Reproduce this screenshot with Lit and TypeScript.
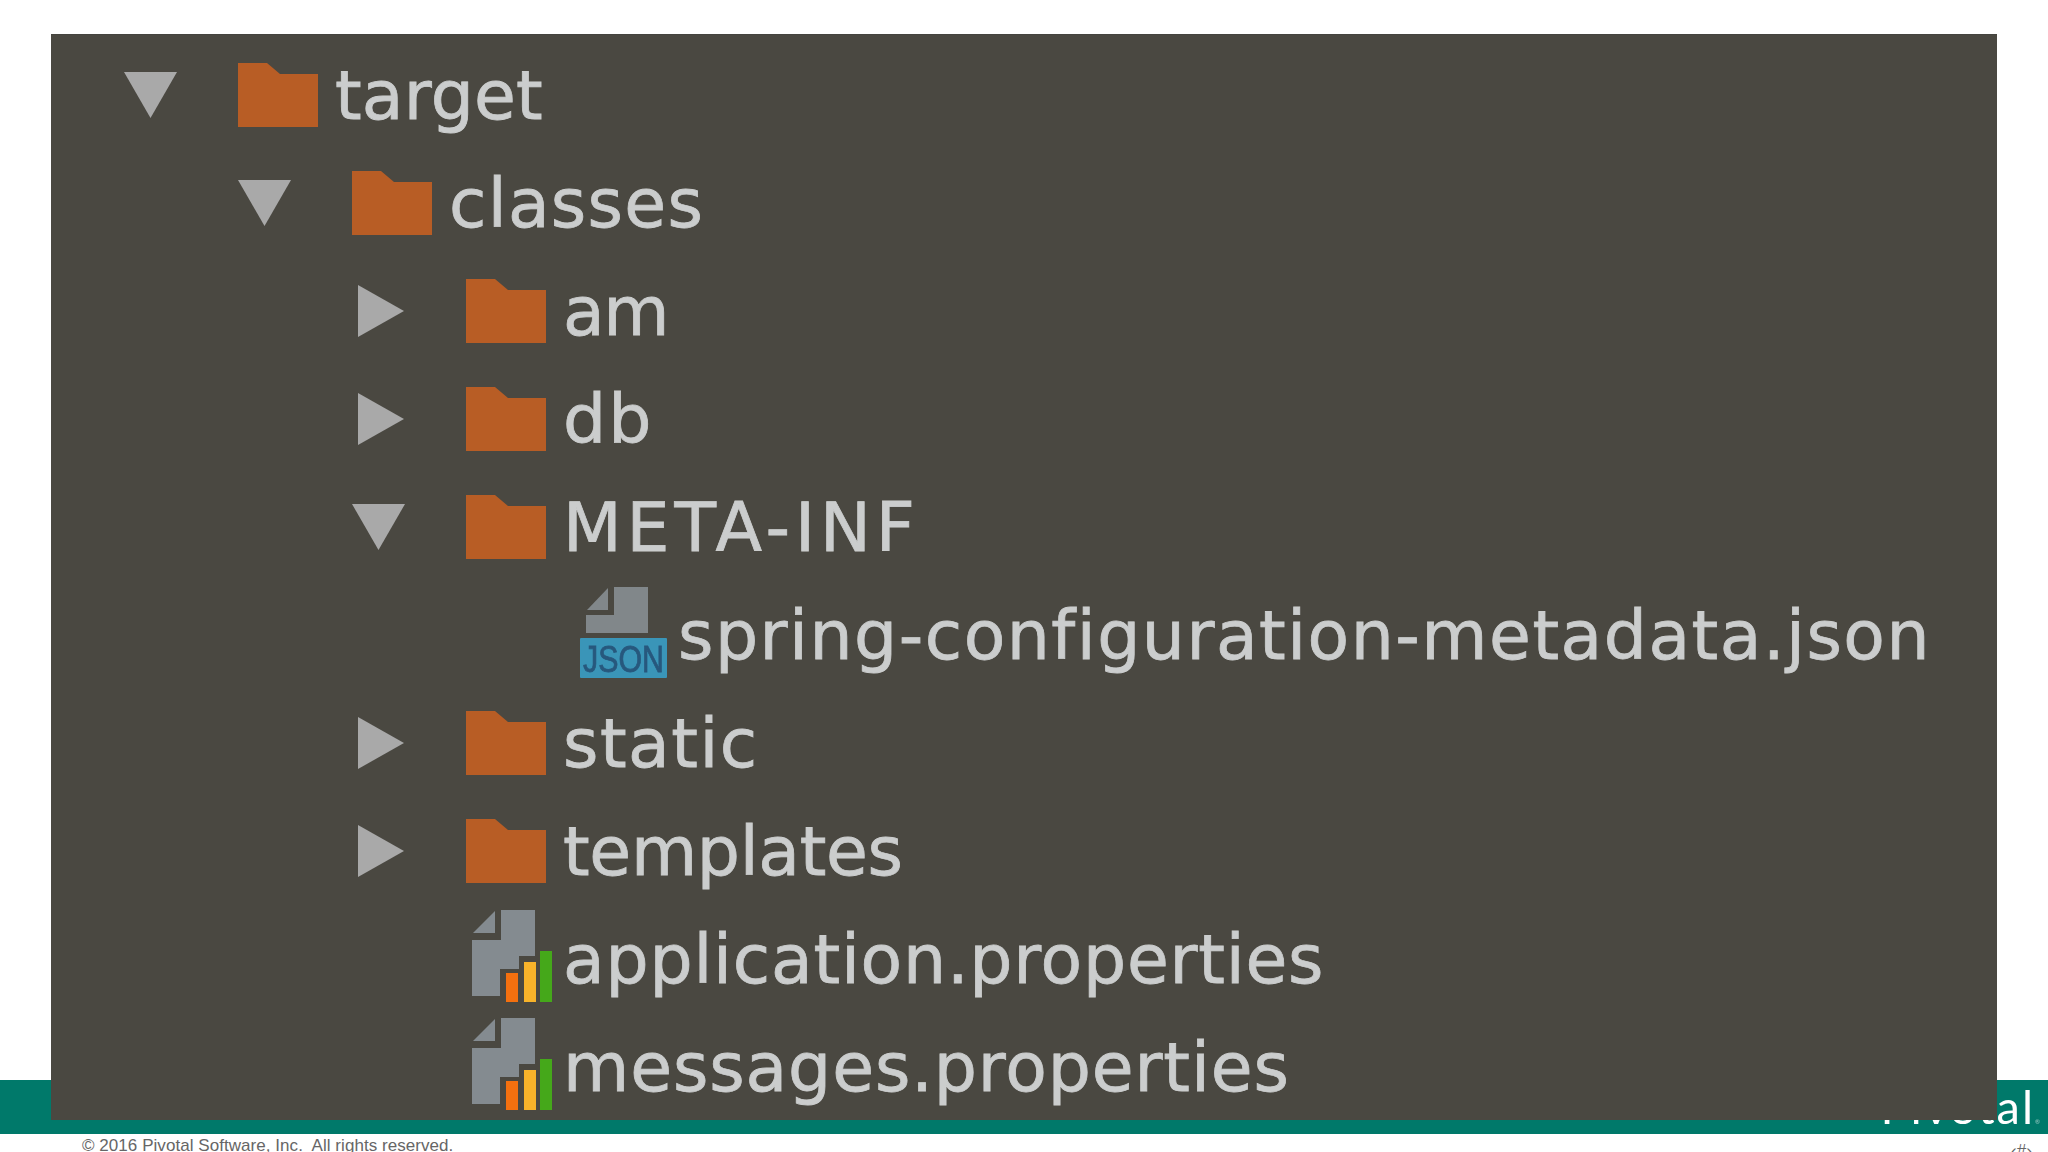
import { LitElement, html, css, svg } from 'lit';
import { customElement } from 'lit/decorators.js';

type Kind = 'folder' | 'json' | 'props';
interface Row {
  depth: number;
  label: string;
  kind: Kind;
  twisty?: 'open' | 'closed';
  // tracking per label, the stand-in font runs narrower than the original
  track: number;
}

const ROWS: Row[] = [
  { depth: 0, label: 'target', kind: 'folder', twisty: 'open', track: 0.2 },
  { depth: 1, label: 'classes', kind: 'folder', twisty: 'open', track: 1.3 },
  { depth: 2, label: 'am', kind: 'folder', twisty: 'closed', track: -1.3 },
  { depth: 2, label: 'db', kind: 'folder', twisty: 'closed', track: 2 },
  { depth: 2, label: 'META-INF', kind: 'folder', twisty: 'open', track: 4.9 },
  { depth: 3, label: 'spring-configuration-metadata.json', kind: 'json', track: 1.5 },
  { depth: 2, label: 'static', kind: 'folder', twisty: 'closed', track: 1.5 },
  { depth: 2, label: 'templates', kind: 'folder', twisty: 'closed', track: -0.3 },
  { depth: 2, label: 'application.properties', kind: 'props', track: 0.8 },
  { depth: 2, label: 'messages.properties', kind: 'props', track: 0.9 },
];

const INDENT = 114;

const folderIcon = html`<svg class="icon" width="80" height="64" viewBox="0 0 80 64">
  <path d="M0 0H29L42 11H80V64H0Z" fill="#b85d25" />
</svg>`;

const jsonIcon = html`<svg class="icon page" width="87" height="91" viewBox="0 0 87 91">
  <path d="M28 1L7 23H28Z" fill="#81878a" />
  <path d="M34 0H68V46H6V28H34Z" fill="#81878a" />
  <rect y="51" width="87" height="40" rx="1" fill="#3a95b8" />
  ${svg`<text transform="translate(43.5 85) scale(.82 1)" text-anchor="middle" stroke="#27587d" stroke-width=".8"
    font-family="Liberation Sans, sans-serif" font-size="37" fill="#27587d">JSON</text>`}
</svg>`;

const propsIcon = html`<svg class="icon props" width="80" height="93" viewBox="0 0 80 93">
  <path d="M23 1L1 23H23Z" fill="#848b90" />
  <path d="M29 0H63V46H47V59H28V86H0V30H29Z" fill="#848b90" />
  <rect x="34" y="63" width="12" height="29" fill="#f4700f" />
  <rect x="52" y="52" width="12" height="40" fill="#f8b32a" />
  <rect x="68" y="41" width="12" height="51" fill="#45a81a" />
</svg>`;

const ICONS = { folder: folderIcon, json: jsonIcon, props: propsIcon };

@customElement('app-root')
export class AppRoot extends LitElement {
  static styles = css`
    :host {
      display: block;
      position: relative;
      width: 2048px;
      height: 1152px;
      overflow: hidden;
      background: #fff;
      font-family: 'Liberation Sans', Arial, sans-serif;
    }
    .slide-body {
      height: 1080px;
    }
    .band {
      position: relative;
      height: 54px;
      background: #00796a;
    }
    .logo {
      position: absolute;
      right: 8px;
      top: 1px;
      font-family: Lato, sans-serif;
      font-size: 47px;
      letter-spacing: 2px;
      line-height: 50px;
      color: #fff;
      filter: blur(0.5px);
    }
    .logo span {
      font-size: 6px;
      letter-spacing: 0;
      opacity: 0.6;
    }
    .foot {
      display: flex;
      justify-content: space-between;
      padding: 2px 16px 0 82px;
      font-size: 17px;
      letter-spacing: 0.05px;
      line-height: 20px;
      color: #666;
      white-space: pre;
    }
    .slide-no {
      padding-top: 5px;
    }

    /* screenshot pasted over the slide */
    .tree {
      position: absolute;
      left: 51px;
      top: 34px;
      width: 1946px;
      height: 1086px;
      box-sizing: border-box;
      padding: 6px 0 0 73px;
      background: #4a4841;
      border-top: 1px solid #45443f;
    }
    .row {
      display: flex;
      align-items: center;
      height: 108px;
      filter: blur(0.65px);
    }
    .twisty {
      flex: none;
      width: 114px;
      display: flex;
    }
    .icon {
      flex: none;
      display: block;
    }
    .icon.page {
      overflow: visible;
    }
    .icon.page,
    .icon.props {
      margin-bottom: 5px;
    }
    .icon.props {
      margin-left: 6px;
    }
    .label {
      margin: 2px 0 0 17px;
      font-family: 'DejaVu Sans', sans-serif;
      font-size: 68px;
      line-height: 108px;
      color: #cbcdcd;
      -webkit-text-stroke: 0.8px #cbcdcd;
      white-space: nowrap;
    }
    .label.json,
    .label.props {
      margin-left: 11px;
    }
  `;

  private twisty(state?: 'open' | 'closed') {
    if (state === 'open') {
      return html`<div class="twisty">
        <svg width="53" height="46" viewBox="0 0 53 46"><path d="M0 0H53L26.5 46Z" fill="#a9a9a9" /></svg>
      </div>`;
    }
    if (state === 'closed') {
      return html`<div class="twisty">
        <svg width="52" height="52" viewBox="0 0 52 52"><path d="M6 0L52 26L6 52Z" fill="#a9a9a9" /></svg>
      </div>`;
    }
    return html`<div class="twisty"></div>`;
  }

  render() {
    return html`
      <div class="slide-body"></div>
      <div class="band"><div class="logo">Pivotal<span>®</span></div></div>
      <div class="foot">
        <span>© 2016 Pivotal Software, Inc.  All rights reserved.</span>
        <span class="slide-no">‹#›</span>
      </div>
      <div class="tree">
        ${ROWS.map(
          (r) => html`<div class="row" style="padding-left:${r.depth * INDENT}px">
            ${this.twisty(r.twisty)}
            ${ICONS[r.kind]}
            <span class="label ${r.kind}" style="letter-spacing:${r.track}px">${r.label}</span>
          </div>`,
        )}
      </div>
    `;
  }
}
